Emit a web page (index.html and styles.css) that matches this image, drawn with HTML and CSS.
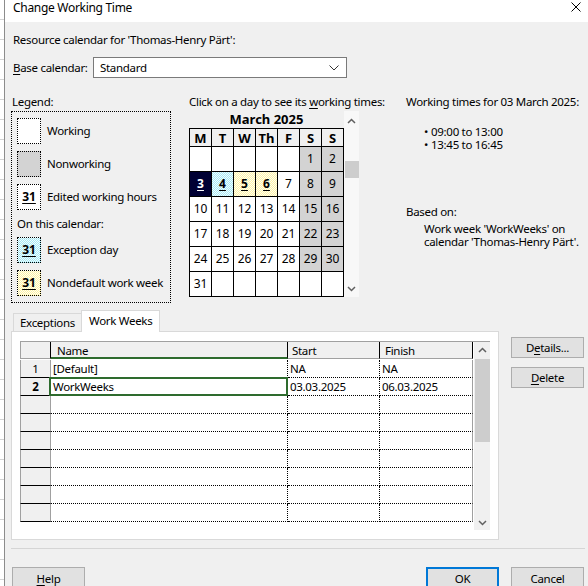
FILE: index.html
```html
<!DOCTYPE html>
<html lang="en">
  <head>
    <meta charset="UTF-8" />
    <title>Change Working Time</title>
    <link rel="stylesheet" href="styles.css">
  </head>
  <body>
    <div class="app-strip"></div>
    <div class="dialog">
      <div class="titlebar">
        <span>Change Working Time</span>
        <svg class="close" width="10" height="10" viewBox="0 0 10 10">
          <path d="M0.5 0.5L9.5 9.5M9.5 0.5L0.5 9.5" stroke="#000" stroke-width="1" />
        </svg>
      </div>

      <div class="content">
        <p class="resource">Resource calendar for 'Thomas-Henry Pärt':</p>

        <div class="base-row">
          <label class="base-label"><u>B</u>ase calendar:</label>
          <div class="select">
            <span>Standard</span>
            <svg width="10" height="6" viewBox="0 0 10 6">
              <path d="M0.5 0.5L5 5L9.5 0.5" fill="none" stroke="#333" stroke-width="1" />
            </svg>
          </div>
        </div>

        <div class="middle">
          <div class="legend-col">
            <div class="caption">Legend:</div>
            <div class="legend-box">
              <div class="legend-item"><span class="swatch"></span>Working</div>
              <div class="legend-item"><span class="swatch nonworking"></span>Nonworking</div>
              <div class="legend-item"><span class="swatch"><b>31</b></span>Edited working hours</div>
              <div class="legend-sub">On this calendar:</div>
              <div class="legend-item"><span class="swatch exception"><b>31</b></span>Exception day</div>
              <div class="legend-item"><span class="swatch nondefault"><b>31</b></span>Nondefault work week</div>
            </div>
          </div>

          <div class="cal-col">
            <div class="caption">Click on a day to see its <u>w</u>orking times:</div>
            <div class="cal-body">
              <div class="cal-main">
                <div class="cal-title">March 2025</div>
                <div class="cal-grid">
                  <div class="head">M</div>
                  <div class="head">T</div>
                  <div class="head">W</div>
                  <div class="head">Th</div>
                  <div class="head">F</div>
                  <div class="head">S</div>
                  <div class="head">S</div>

                  <div></div><div></div><div></div><div></div><div></div>
                  <div class="off">1</div><div class="off">2</div>

                  <div class="selected"><b>3</b></div>
                  <div class="exception"><b>4</b></div>
                  <div class="nondefault"><b>5</b></div>
                  <div class="nondefault"><b>6</b></div>
                  <div>7</div><div class="off">8</div><div class="off">9</div>

                  <div>10</div><div>11</div><div>12</div><div>13</div><div>14</div>
                  <div class="off">15</div><div class="off">16</div>

                  <div>17</div><div>18</div><div>19</div><div>20</div><div>21</div>
                  <div class="off">22</div><div class="off">23</div>

                  <div>24</div><div>25</div><div>26</div><div>27</div><div>28</div>
                  <div class="off">29</div><div class="off">30</div>

                  <div>31</div><div></div><div></div><div></div><div></div><div></div><div></div>
                </div>
              </div>
              <div class="cal-scroll">
                <svg class="arrow" width="9" height="6" viewBox="0 0 9 6">
                  <path d="M1 5L4.5 1.5L8 5" fill="none" stroke="#606060" stroke-width="1.5" />
                </svg>
                <div class="cal-thumb"></div>
                <svg class="arrow down" width="9" height="6" viewBox="0 0 9 6">
                  <path d="M1 1L4.5 4.5L8 1" fill="none" stroke="#606060" stroke-width="1.5" />
                </svg>
              </div>
            </div>
          </div>

          <div class="info-col">
            <div class="caption">Working times for 03 March 2025:</div>
            <ul class="times">
              <li>09:00 to 13:00</li>
              <li>13:45 to 16:45</li>
            </ul>
            <div class="caption based">Based on:</div>
            <p class="based-text">Work week 'WorkWeeks' on<br />calendar 'Thomas-Henry Pärt'.</p>
          </div>
        </div>

        <div class="tab-area">
          <div class="tab-block">
            <div class="tabs">
              <div class="tab">Exceptions</div>
              <div class="tab active">Work Weeks</div>
            </div>
            <div class="panel">
              <div class="grid">
                <div class="grid-table">
                  <div class="row header">
                    <div class="rh"></div>
                    <div class="cell name">Name</div>
                    <div class="cell start">Start</div>
                    <div class="cell finish">Finish</div>
                  </div>
                  <div class="row">
                    <div class="rh">1</div>
                    <div class="cell name">[Default]</div>
                    <div class="cell start">NA</div>
                    <div class="cell finish">NA</div>
                  </div>
                  <div class="row current">
                    <div class="rh">2</div>
                    <div class="cell name">WorkWeeks</div>
                    <div class="cell start">03.03.2025</div>
                    <div class="cell finish">06.03.2025</div>
                  </div>
                  <div class="row"><div class="rh"></div><div class="cell name"></div><div class="cell start"></div><div class="cell finish"></div></div>
                  <div class="row"><div class="rh"></div><div class="cell name"></div><div class="cell start"></div><div class="cell finish"></div></div>
                  <div class="row"><div class="rh"></div><div class="cell name"></div><div class="cell start"></div><div class="cell finish"></div></div>
                  <div class="row"><div class="rh"></div><div class="cell name"></div><div class="cell start"></div><div class="cell finish"></div></div>
                  <div class="row"><div class="rh"></div><div class="cell name"></div><div class="cell start"></div><div class="cell finish"></div></div>
                  <div class="row"><div class="rh"></div><div class="cell name"></div><div class="cell start"></div><div class="cell finish"></div></div>
                  <div class="row"><div class="rh"></div><div class="cell name"></div><div class="cell start"></div><div class="cell finish"></div></div>
                </div>
                <div class="grid-scroll">
                  <svg class="arrow" width="9" height="6" viewBox="0 0 9 6">
                    <path d="M1 5L4.5 1.5L8 5" fill="none" stroke="#606060" stroke-width="1.5" />
                  </svg>
                  <div class="grid-thumb"></div>
                  <svg class="arrow down" width="9" height="6" viewBox="0 0 9 6">
                    <path d="M1 1L4.5 4.5L8 1" fill="none" stroke="#606060" stroke-width="1.5" />
                  </svg>
                </div>
              </div>
            </div>
          </div>

          <div class="side-buttons">
            <button class="btn">D<u>e</u>tails...</button>
            <button class="btn"><u>D</u>elete</button>
          </div>
        </div>

        <div class="separator"></div>

        <div class="footer">
          <button class="btn"><u>H</u>elp</button>
          <div class="footer-right">
            <button class="btn default">OK</button>
            <button class="btn">Cancel</button>
          </div>
        </div>
      </div>
    </div>
  </body>
</html>
```

FILE: styles.css
```css
* {
  box-sizing: border-box;
}

html,
body {
  margin: 0;
  padding: 0;
}

body {
  width: 588px;
  height: 586px;
  overflow: hidden;
  display: flex;
  background: #f0f0f0;
  color: #000;
  font-family: "Noto Sans", sans-serif;
  font-size: 11.5px;
  line-height: 16px;
  letter-spacing: -0.3px;
}

u {
  text-decoration-thickness: 1px;
  text-underline-offset: 2px;
}

.app-strip {
  width: 5px;
  flex: none;
  background: repeating-linear-gradient(#fff 0 19px, #d4d4d4 19px 20px);
  border-right: 1px solid #8c8c8c;
}

.dialog {
  flex: 1;
  display: flex;
  flex-direction: column;
}

.titlebar {
  height: 22px;
  flex: none;
  display: flex;
  justify-content: space-between;
  align-items: flex-start;
  padding-left: 8px;
  background: #fff;
  font-size: 12px;
}

.titlebar .close {
  margin: 2px 7px 0 0;
}

.content {
  padding: 10px 0 0 8px;
}

.resource {
  margin: 0;
}

/* base calendar */

.base-row {
  display: flex;
  align-items: center;
  height: 21px;
  margin-top: 9px;
}

.base-label {
  width: 80px;
}

.select {
  width: 254px;
  height: 21px;
  display: flex;
  align-items: center;
  justify-content: space-between;
  padding: 0 7px 0 6px;
  background: #fff;
  border: 1px solid #7a7a7a;
}

/* legend, calendar, info */

.middle {
  display: flex;
  margin: 16px 0 0 -2px;
}

.caption {
  line-height: 16px;
  white-space: nowrap;
}

.legend-col {
  width: 160px;
  flex: none;
}

.legend-col .caption {
  padding-left: 1px;
}

.legend-box {
  height: 192px;
  margin-top: 1px;
  padding: 6px 5px 0;
  border: 1px dotted #000;
}

.legend-item {
  display: flex;
  align-items: center;
  gap: 6px;
  height: 26px;
  margin-bottom: 7px;
  white-space: nowrap;
}

.legend-sub {
  margin: -1px 0 5px;
  line-height: 16px;
}

.swatch {
  width: 24px;
  height: 26px;
  flex: none;
  display: flex;
  align-items: center;
  justify-content: center;
  background: #fff;
  border: 1px dotted #000;
  letter-spacing: 0;
}

.swatch b,
.cal-grid b {
  text-decoration: underline;
  text-decoration-thickness: 1px;
  text-underline-offset: 2px;
  font-size: 12px;
}

.swatch.nonworking {
  background: #d3d3d3;
}

.exception {
  background: repeating-conic-gradient(#a6e9f4 0 25%, #f2fdff 0 50%) 0 0 / 2px 2px !important;
}

.nondefault {
  background: repeating-conic-gradient(#fff3a6 0 25%, #fffff2 0 50%) 0 0 / 2px 2px !important;
}

.cal-col {
  width: 170px;
  flex: none;
  margin-left: 18px;
}

.cal-body {
  display: flex;
  margin-top: 1px;
  letter-spacing: 0;
}

.cal-main {
  width: 155px;
}

.cal-title {
  height: 17px;
  text-align: center;
  font-size: 13px;
  font-weight: bold;
  line-height: 17px;
}

.cal-grid {
  display: grid;
  grid-template-columns: repeat(7, 21px);
  grid-template-rows: 17px repeat(6, 24px);
  gap: 1px;
  padding: 1px;
  background: #000;
}

.cal-grid > div {
  display: flex;
  align-items: center;
  justify-content: center;
  background: #fff;
  font-size: 12px;
}

.cal-grid > .head {
  background: #f0f0f0;
  font-size: 13px;
  font-weight: bold;
}

.cal-grid > .off {
  background: #d3d3d3;
}

.cal-grid > .selected {
  background: #000033;
  color: #fff;
}

.cal-scroll {
  width: 15px;
  height: 186px;
  display: flex;
  flex-direction: column;
  align-items: center;
  background: #f8f8f8;
}

.cal-scroll .arrow {
  margin-top: 7px;
}

.cal-thumb {
  width: 14px;
  height: 17px;
  margin-top: 37px;
  background: #cdcdcd;
}

.cal-scroll .arrow.down {
  margin-top: auto;
  margin-bottom: 5px;
}

.info-col {
  margin-left: 47px;
}

.times {
  margin: 15px 0 0;
  padding-left: 18px;
  list-style: none;
  line-height: 13px;
}

.times li::before {
  content: "\2022";
  margin-right: 3px;
}

.caption.based {
  margin-top: 53px;
}

.based-text {
  margin: 2px 0 0 18px;
  line-height: 13px;
}

/* tabs and work weeks grid */

.tab-area {
  display: flex;
  margin-top: 7px;
}

.tabs {
  display: flex;
  align-items: flex-end;
  height: 22px;
  margin-bottom: -1px;
  position: relative;
}

.tab {
  height: 19px;
  padding: 0 6px;
  border: 1px solid #d9d9d9;
  border-bottom: none;
  line-height: 18px;
}

.tab.active {
  height: 22px;
  margin-left: -1px;
  padding: 0 7px;
  background: #fff;
  line-height: 20px;
}

.panel {
  width: 488px;
  height: 209px;
  margin-left: -2px;
  padding: 9px 8px;
  background: #fff;
  border: 1px solid #d9d9d9;
}

.grid {
  display: flex;
  height: 189px;
  border-top: 1px solid #a0a0a0;
}

.grid-table {
  width: 454px;
  overflow: hidden;
}

.row {
  display: flex;
  height: 18px;
}

.rh {
  width: 31px;
  flex: none;
  text-align: center;
  background: #f0f0f0;
  border-left: 1px solid #a0a0a0;
  border-right: 1px solid #a0a0a0;
  border-bottom: 1px solid #000;
  line-height: 17px;
}

.cell {
  flex: none;
  padding-left: 2px;
  border-bottom: 1px dotted #000;
  line-height: 17px;
  white-space: nowrap;
}

.cell.name {
  width: 237px;
  border-right: 1px dotted #000;
}

.cell.start {
  width: 92px;
  border-right: 1px dotted #000;
}

.cell.finish {
  width: 93px;
  border-right: 1px solid #a0a0a0;
}

.row.header > div {
  height: 17px;
  background: #f0f0f0;
  border-bottom: 1px solid #a0a0a0;
  border-right: 1px solid #000;
}

.row.header .rh {
  border-left: 1px solid #a0a0a0;
}

.row.header .cell.name {
  padding-left: 6px;
  border-bottom: 2px solid #2e6b2e;
}

.row.header .cell.start {
  padding-left: 4px;
}

.row.header .cell.finish {
  padding-left: 5px;
}

.row.current .rh {
  font-weight: bold;
}

.row.current .cell.name {
  position: relative;
}

.row.current .cell.name::after {
  content: "";
  position: absolute;
  top: -1px;
  left: -2px;
  right: -1px;
  bottom: -1px;
  border: 2px solid #2e6b2e;
}

.grid-scroll {
  width: 16px;
  display: flex;
  flex-direction: column;
  align-items: center;
  background: #f0f0f0;
}

.grid-scroll .arrow {
  margin-top: 5px;
}

.grid-thumb {
  width: 15px;
  height: 83px;
  margin-top: 6px;
  background: #cdcdcd;
}

.grid-scroll .arrow.down {
  margin-top: auto;
  margin-bottom: 4px;
}

/* buttons */

.btn {
  width: 73px;
  height: 21px;
  padding: 0;
  font-family: inherit;
  font-size: inherit;
  letter-spacing: inherit;
  color: #000;
  background: #e1e1e1;
  border: 1px solid #adadad;
}

.btn.default {
  border: 2px solid #0078d7;
}

.side-buttons {
  display: flex;
  flex-direction: column;
  gap: 9px;
  margin-left: 12px;
  padding-top: 27px;
}

.separator {
  width: 574px;
  margin: 8px 0 0 -2px;
  border-top: 1px solid #d5d5d5;
}

.footer {
  display: flex;
  justify-content: space-between;
  margin: 18px 0 0 -1px;
}

.footer .btn {
  height: 23px;
}

.footer-right {
  display: flex;
  gap: 12px;
  margin-right: 4px;
}
```
